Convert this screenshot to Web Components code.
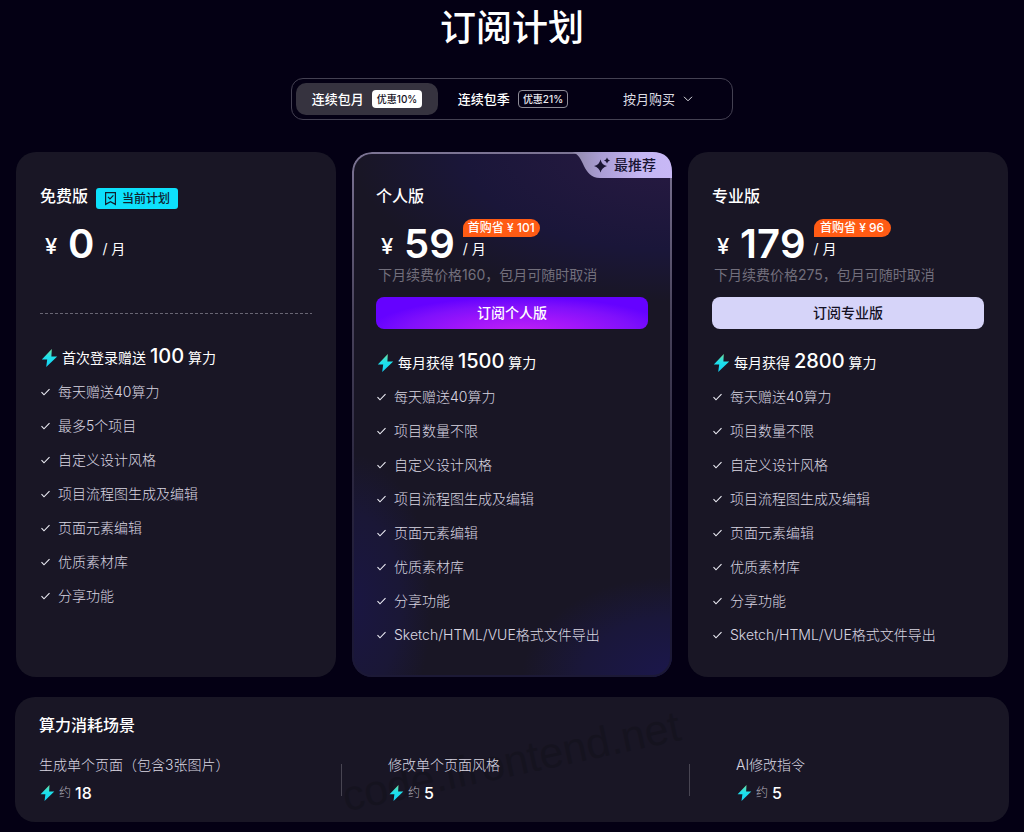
<!DOCTYPE html>
<html lang="zh-CN">
<head>
<meta charset="utf-8">
<meta name="viewport" content="width=device-width, initial-scale=1">
<title>订阅计划</title>
<style>
  html { background: #040014; }
  body {
    margin: 0;
    color: #fff;
    font-family: Inter, "Noto Sans CJK SC", sans-serif;
    font-size: 14px;
    line-height: 20px;
  }
</style>
</head>
<body>
<pricing-page></pricing-page>
<script>
const define = (name, html, setup) => {
  const template = document.createElement('template');
  template.innerHTML = html;
  customElements.define(name, class extends HTMLElement {
    constructor() {
      super();
      this.attachShadow({ mode: 'open' }).append(template.content.cloneNode(true));
    }
    connectedCallback() {
      if (setup) setup(this, this.shadowRoot);
    }
  });
};

define('bolt-icon', `
  <style>
    :host { display: block; flex: none; width: 18px; height: 20px; }
    :host([small]) { width: 16px; height: 18px; }
    svg { display: block; width: 100%; height: 100%; }
  </style>
  <svg viewBox="0 0 18 20" aria-hidden="true">
    <defs><linearGradient id="g" x1="0" y1="0" x2="0" y2="1">
      <stop offset="0" stop-color="#6fe0a0"/><stop offset=".45" stop-color="#1fe0ea"/><stop offset="1" stop-color="#12d2f6"/>
    </linearGradient></defs>
    <path d="M11.800 1 1.800 11.400h5.400L6.200 19l11-10.600h-5.800z" fill="url(#g)"/>
  </svg>`);

define('check-item', `
  <style>
    :host { display: flex; align-items: center; gap: 7px; height: 20px; color: #dad7e2; font-weight: 300; white-space: nowrap; }
    svg { flex: none; width: 11px; height: 10px; }
  </style>
  <svg viewBox="0 0 11 10" fill="none" stroke="#eeeef6" stroke-width="1.1" aria-hidden="true"><path d="M1.500 5.200 4 7.800 9.500 2.200"/></svg>
  <slot></slot>`);

define('power-line', `
  <style>
    :host { display: flex; align-items: center; height: 24px; white-space: nowrap; }
    p { margin: 0 0 2px 4px; line-height: 24px; }
    b { font-weight: 500; font-size: 20px; }
  </style>
  <bolt-icon></bolt-icon>
  <p><slot></slot> <b></b> 算力</p>`,
  (el, root) => { root.querySelector('b').textContent = el.getAttribute('amount'); });

define('plan-price', `
  <style>
    :host { display: flex; height: 40px; padding-left: 5px; align-items: center; white-space: nowrap; line-height: 40px; }
    .yen { width: 23px; margin-top: 3px; font-size: 22px; font-weight: 500; }
    .sum { font-size: 40px; font-weight: 600; font-kerning: none; }
    .unit { position: relative; margin: 10px 0 0 8px; line-height: 20px; }
    .save {
      position: absolute; left: 0; bottom: 22px; box-sizing: border-box; min-width: 77px; height: 18px; padding: 0 5px;
      border-radius: 9px 9px 9px 0; background: #ff5b14; text-align: center;
      font-size: 12px; font-weight: 500; line-height: 18px;
    }
    :host(:not([save])) .save { display: none; }
  </style>
  <span class="yen">¥</span><span class="sum"></span><span class="unit">/ 月<span class="save"></span></span>`,
  (el, root) => {
    root.querySelector('.sum').textContent = el.getAttribute('sum');
    root.querySelector('.save').textContent = el.getAttribute('save') || '';
  });

define('plan-card', `
  <style>
    :host {
      position: relative; display: block; box-sizing: border-box; min-width: 0;
      padding: 32px 24px; border-radius: 20px; background: #191625;
    }
    :host([featured]) {
      background:
        radial-gradient(ellipse 320px 150px at 100% 0, #281a42, #1a1639 65%, transparent 100%),
        radial-gradient(ellipse 150px 100px at 100% 100%, #1b174c, #1a173a 60%, transparent 100%),
        radial-gradient(ellipse 80px 150px at 0 86%, #1a1642, #1a1736 60%, transparent 100%),
        #191625;
    }
    :host([featured])::before {
      content: ""; position: absolute; inset: 0; padding: 2px; border-radius: inherit; pointer-events: none;
      background: linear-gradient(#7c7494, #4a445d 30%, #2c2840 60%, #1c1936 90%);
      -webkit-mask: linear-gradient(#000 0 0) content-box, linear-gradient(#000 0 0);
      -webkit-mask-composite: xor; mask-composite: exclude;
    }
    header { display: flex; align-items: flex-start; gap: 8px; height: 40px; }
    h2 { margin: 0; font-size: 16px; font-weight: 500; line-height: 24px; }
    .note { height: 20px; margin: 1px 0 12px 2px; color: #726f7c; white-space: nowrap; }
    .action { height: 32px; margin-bottom: 22px; }
    .list { display: grid; gap: 14px; margin-top: 12px; }
  </style>
  <header><h2><slot name="title"></slot></h2><slot name="badge"></slot></header>
  <slot name="price"></slot>
  <div class="note"><slot name="note"></slot></div>
  <div class="action"><slot name="action"></slot></div>
  <slot name="power"></slot>
  <div class="list"><slot></slot></div>
  <slot name="ribbon"></slot>`);

define('current-badge', `
  <style>
    :host { display: flex; align-items: center; gap: 5px; height: 21px; margin-top: 4px; padding: 0 8px; border-radius: 3px; background: #0de0fb; color: #10202e; font-size: 12px; font-weight: 500; line-height: 20px; white-space: nowrap; }
    svg { width: 13px; height: 15px; }
  </style>
  <svg viewBox="0 0 13 15" fill="none" stroke="#10202e" stroke-width="1.2" aria-hidden="true"><path d="M1.600 1.600h9.800v11.800L6.500 10.800l-4.900 2.600zM4 5.800l2 2 3.400-3.400"/></svg>
  <slot></slot>`);

define('top-ribbon', `
  <style>
    :host { position: absolute; top: 0; right: 0; width: 100px; height: 26px; color: #1a1533; font-weight: 500; }
    .shape { display: block; width: 100px; height: 26px; }
    .label { position: absolute; inset: 0 16px 0 auto; display: flex; align-items: center; gap: 4px; white-space: nowrap; }
    .spark { width: 16px; height: 16px; }
  </style>
  <svg class="shape" viewBox="0 0 100 26" aria-hidden="true">
    <defs><linearGradient id="r"><stop offset="0" stop-color="#8f88a8"/><stop offset=".3" stop-color="#ab9ed6"/><stop offset=".7" stop-color="#c5b6f3"/><stop offset="1" stop-color="#c8b8f6"/></linearGradient></defs>
    <path d="M0 0H80Q100 0 100 20V26H28C10 26 13 3 0 0z" fill="url(#r)"/>
  </svg>
  <span class="label">
    <svg class="spark" viewBox="0 0 16 16" fill="#1a1533" aria-hidden="true"><path d="M6.500 2.500Q7.800 8 13 9Q7.800 10.500 6.500 15.500Q5.200 10.500 0 9Q5.200 8 6.500 2.500zM13 .5Q13.600 2.900 16 3.400Q13.600 4 13 6.400Q12.400 4 10 3.400Q12.400 2.900 13 .5z"/></svg>
    <slot></slot>
  </span>`);

define('buy-button', `
  <style>
    :host { display: block; }
    button {
      display: block; width: 100%; height: 32px; padding: 0; border: 0; border-radius: 8px;
      font: inherit; font-weight: 500; cursor: pointer; background: #d6d4f9; color: #141124;
    }
    :host([vivid]) button { color: #fff; background: radial-gradient(ellipse 56% 110% at 53% 110%, #c121f5, #a216fa 40%, #8010fb 75%, #6502ff 100%); }
  </style>
  <button type="button"><slot></slot></button>`);

define('period-tabs', `
  <style>
    :host { display: flex; box-sizing: border-box; width: 442px; max-width: 100%; height: 42px; margin: 0 auto; padding: 4px; border: 1px solid #444152; border-radius: 12px; }
    button { display: flex; align-items: center; justify-content: center; gap: 8px; height: 32px; padding: 0; border: 0; border-radius: 10px; background: none; color: #fff; font: inherit; font-size: 13px; font-weight: 500; white-space: nowrap; cursor: pointer; flex: 142 0 0; }
    .on { background: #36333f; }
    .last { flex-grow: 140; color: #dddce3; font-weight: 400; }
    .q { flex-grow: 150; }
    .tag { box-sizing: border-box; height: 18px; padding: 0 5px; border-radius: 4px; background: #fff; color: #141124; font-size: 10px; line-height: 18px; }
    .q .tag { padding: 0 4px; border: 1px solid #8d8b96; background: none; color: #eeedf2; line-height: 16px; }
    svg { width: 10px; height: 6px; }
  </style>
  <button type="button" class="on" aria-pressed="true">连续包月<span class="tag">优惠10%</span></button>
  <button type="button" class="q">连续包季<span class="tag">优惠21%</span></button>
  <button type="button" class="last">按月购买<svg viewBox="0 0 10 6" fill="none" stroke="#dddce3" aria-hidden="true"><path d="M1 .8l4 4 4-4"/></svg></button>`);

define('usage-item', `
  <style>
    :host { display: block; min-width: 0; color: #dad7e2; font-weight: 300; white-space: nowrap; }
    .cost { display: flex; align-items: center; height: 20px; margin-top: 8px; font-size: 12px; }
    .cost span { margin: 0 4px; color: #b2afbc; }
    b { color: #fff; font-size: 16px; font-weight: 500; }
  </style>
  <slot></slot>
  <div class="cost"><bolt-icon small></bolt-icon><span>约</span><b></b></div>`,
  (el, root) => { root.querySelector('b').textContent = el.getAttribute('cost'); });

define('usage-panel', `
  <style>
    :host { position: relative; display: block; box-sizing: border-box; height: 125px; margin: 20px 15px 10px; padding: 16px 24px; border-radius: 20px; background: #191625; }
    h2 { margin: 0 0 18px; font-size: 16px; font-weight: 500; line-height: 24px; }
    .row { display: grid; grid-template-columns: 302px 1px 347px 1px 1fr; }
    i { height: 32px; margin-top: 9px; background: #484552; }
    .inset { padding-left: 46px; }
    .mark { position: absolute; left: 324px; top: 40px; color: #15131f; font-family: "Liberation Sans", sans-serif; font-size: 43px; line-height: 48px; transform: rotate(-12deg); white-space: nowrap; }
    .row, h2 { position: relative; z-index: 1; }
  </style>
  <span class="mark">code.ifrontend.net</span>
  <h2>算力消耗场景</h2>
  <div class="row">
    <usage-item cost="18">生成单个页面（包含3张图片）</usage-item><i></i>
    <usage-item class="inset" cost="5">修改单个页面风格</usage-item><i></i>
    <usage-item class="inset" cost="5">AI修改指令</usage-item>
  </div>`);

const full = ['每天赠送40算力', '项目数量不限', '自定义设计风格', '项目流程图生成及编辑', '页面元素编辑', '优质素材库', '分享功能', 'Sketch/HTML/VUE格式文件导出'];
const free = ['每天赠送40算力', '最多5个项目', ...full.slice(2, 7)];
const items = list => list.map(text => `<check-item>${text}</check-item>`).join('');

define('pricing-page', `
  <style>
    :host { display: block; padding-top: 2px; }
    h1 { margin: 0 0 24px; font-size: 36px; font-weight: 500; line-height: 52px; text-align: center; }
    .plans { display: grid; grid-template-columns: repeat(3, minmax(0, 1fr)); gap: 16px; margin-top: 32px; padding: 0 16px; }
    hr { margin: 0; border: 0; height: 1px; background: repeating-linear-gradient(90deg, #686573 0 3px, transparent 3px 5px); transform: translateY(16px); }
    .free-power { margin-top: -5px; }
  </style>
  <h1>订阅计划</h1>
  <period-tabs></period-tabs>
  <div class="plans">
    <plan-card>
      <span slot="title">免费版</span>
      <current-badge slot="badge">当前计划</current-badge>
      <plan-price slot="price" sum="0"></plan-price>
      <hr slot="action">
      <power-line class="free-power" slot="power" amount="100">首次登录赠送</power-line>
      ${items(free)}
    </plan-card>
    <plan-card featured>
      <span slot="title">个人版</span>
      <plan-price slot="price" sum="59" save="首购省 ¥ 101"></plan-price>
      <span slot="note">下月续费价格160，包月可随时取消</span>
      <buy-button slot="action" vivid>订阅个人版</buy-button>
      <power-line slot="power" amount="1500">每月获得</power-line>
      ${items(full)}
      <top-ribbon slot="ribbon">最推荐</top-ribbon>
    </plan-card>
    <plan-card>
      <span slot="title">专业版</span>
      <plan-price slot="price" sum="179" save="首购省 ¥ 96"></plan-price>
      <span slot="note">下月续费价格275，包月可随时取消</span>
      <buy-button slot="action">订阅专业版</buy-button>
      <power-line slot="power" amount="2800">每月获得</power-line>
      ${items(full)}
    </plan-card>
  </div>
  <usage-panel></usage-panel>`);
</script>
</body>
</html>
